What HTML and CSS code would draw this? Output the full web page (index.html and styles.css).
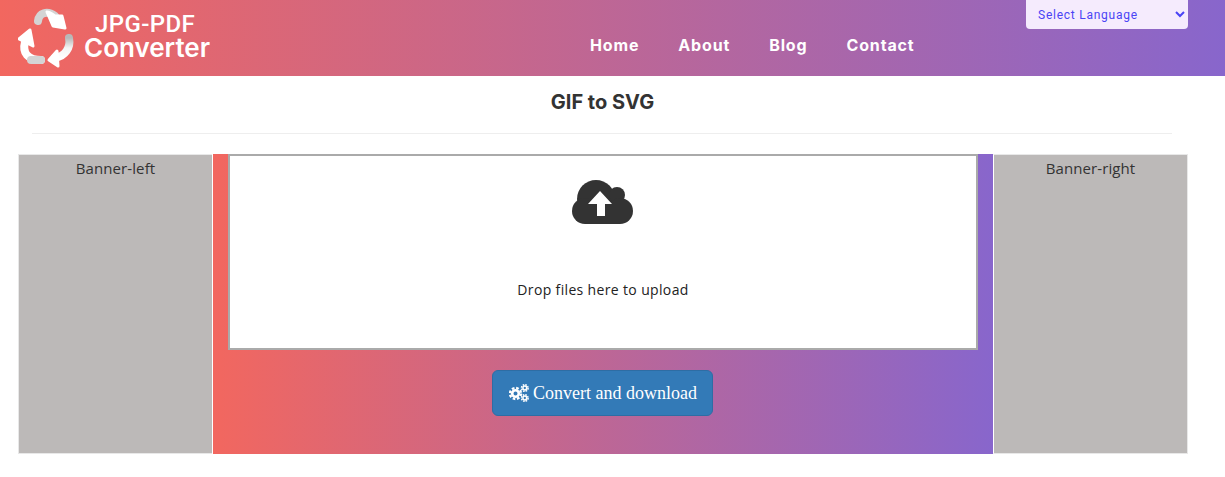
FILE: index.html
```html
<!DOCTYPE html>
<html>
  <head>
    <meta charset="UTF-8" />
    <title>GIF to SVG</title>
    <link rel="stylesheet" href="styles.css">
  </head>
  <body>
    <header class="topbar">
      <a class="logo" href="#">
        <svg class="logo-mark" width="58" height="60" viewBox="18 8 58 60">
          <defs>
            <linearGradient id="shade" x1="0" y1="0" x2="0" y2="1">
              <stop offset="0" stop-color="#b8b8b8" />
              <stop offset="0.5" stop-color="#f4f4f4" />
              <stop offset="1" stop-color="#ffffff" />
            </linearGradient>
          </defs>
          <!-- top arrow -->
          <path d="M38 21 C39 13 47 10 55 16" fill="none" stroke="#d4d4d4" stroke-width="8" stroke-linecap="round" />
          <path d="M47 12 C50 12 52 14 55 16 L62 16 L65 28 L53 26 Z" fill="#fff" stroke="#fff" stroke-width="3" stroke-linejoin="round" />
          <!-- left arrow -->
          <path d="M25 42 C22 53 28 60 41 60" fill="none" stroke="#fff" stroke-width="8" stroke-linecap="round" />
          <path d="M31 60 L41 60" stroke="#d4d4d4" stroke-width="8" stroke-linecap="round" />
          <path d="M30 30 L19 39 L33 46 Z" fill="#fff" stroke="#fff" stroke-width="3" stroke-linejoin="round" />
          <!-- right arrow -->
          <path d="M69 38 C71 48 65 56 55 58" fill="none" stroke="url(#shade)" stroke-width="8" stroke-linecap="round" />
          <path d="M49 60 L57 51 L58 66 Z" fill="#fff" stroke="#fff" stroke-width="3" stroke-linejoin="round" />
        </svg>
        <span class="logo-text">
          <span class="logo-top">JPG-PDF</span>
          <span class="logo-bottom">Converter</span>
        </span>
      </a>
      <nav class="nav">
        <a href="#">Home</a>
        <a href="#">About</a>
        <a href="#">Blog</a>
        <a href="#">Contact</a>
      </nav>
      <select class="lang">
        <option>Select Language</option>
      </select>
    </header>

    <h1 class="title">GIF to SVG</h1>
    <hr class="rule" />

    <main class="row">
      <aside class="banner">Banner-left</aside>
      <section class="tool">
        <div class="dropzone">
          <svg class="cloud" width="61" height="44" viewBox="0 0 61 44">
            <circle cx="24" cy="19" r="19" fill="#333" />
            <circle cx="45" cy="15" r="8" fill="#333" />
            <circle cx="13" cy="31" r="13" fill="#333" />
            <circle cx="48" cy="31" r="13" fill="#333" />
            <rect x="13" y="22" width="35" height="22" fill="#333" />
            <path d="M28 11 L40 24 L33 24 L33 36 L25 36 L25 24 L16 24 Z" fill="#fff" />
          </svg>
          <p class="drop-text">Drop files here to upload</p>
        </div>
        <button class="convert">
          <svg class="cogs" width="20" height="18" viewBox="0 0 20 18">
            <circle cx="6.5" cy="9.5" r="3.3" fill="none" stroke="#fff" stroke-width="2.6" />
            <circle cx="6.5" cy="9.5" r="5.5" fill="none" stroke="#fff" stroke-width="2.4" stroke-dasharray="2.6 1.72" />
            <circle cx="15.8" cy="4" r="1.9" fill="none" stroke="#fff" stroke-width="1.5" />
            <circle cx="15.8" cy="4" r="3.3" fill="none" stroke="#fff" stroke-width="1.5" stroke-dasharray="1.6 1" />
            <circle cx="15.8" cy="14" r="1.9" fill="none" stroke="#fff" stroke-width="1.5" />
            <circle cx="15.8" cy="14" r="3.3" fill="none" stroke="#fff" stroke-width="1.5" stroke-dasharray="1.6 1" />
          </svg>
          Convert and download
        </button>
      </section>
      <aside class="banner">Banner-right</aside>
    </main>
  </body>
</html>
```

FILE: styles.css
```css
:root {
  --grad-start: #f2675f;
  --grad-end: #8866cc;
  --text-color: #333333;
}

body {
  margin: 0;
  font-family: "Open Sans", "Liberation Sans", sans-serif;
  color: var(--text-color);
  background: #fff;
}

.topbar {
  display: flex;
  height: 76px;
  padding-right: 37px;
  box-sizing: border-box;
  background: linear-gradient(to right, var(--grad-start), var(--grad-end));
}

.logo {
  display: flex;
  align-items: center;
  width: 590px;
  padding-left: 18px;
  box-sizing: border-box;
  color: #fff;
  text-decoration: none;
}

.logo-mark {
  flex: none;
}

.logo-text {
  display: flex;
  flex-direction: column;
  margin-left: 8px;
  padding-bottom: 5px;
}

.logo-top {
  margin-left: 11px;
  font-family: "Roboto", sans-serif;
  font-size: 24px;
  font-weight: 500;
  line-height: 24px;
  letter-spacing: 0.4px;
}

.logo-bottom {
  font-family: "Inter", sans-serif;
  font-size: 26px;
  font-weight: 600;
  line-height: 24px;
}

.nav {
  display: flex;
  gap: 39px;
  padding-top: 35px;
}

.nav a {
  font-family: "Inter", sans-serif;
  font-size: 16px;
  font-weight: 700;
  line-height: 20px;
  letter-spacing: 0.85px;
  color: #fff;
  text-decoration: none;
}

.lang {
  align-self: flex-start;
  width: 162px;
  height: 29px;
  margin-left: auto;
  padding: 0 0 0 8px;
  border: none;
  border-radius: 0 0 4px 4px;
  background: #f5ebfd;
  color: #4a44f5;
  font-family: "Roboto", sans-serif;
  font-size: 12px;
  letter-spacing: 0.75px;
}

.title {
  margin: 0;
  padding: 15px 0 0 0;
  width: 1205px;
  text-align: center;
  font-family: "Inter", sans-serif;
  font-size: 20px;
  font-weight: 700;
  line-height: 23px;
}

.rule {
  width: 1140px;
  margin: 19px 0 20px 32px;
  border: none;
  border-top: 1px solid #eee;
}

.row {
  display: flex;
  width: 1170px;
  height: 300px;
  margin-left: 18px;
}

.banner {
  width: 194px;
  flex: none;
  box-sizing: border-box;
  padding-top: 4px;
  background: #bcb9b8;
  border: 1px solid #e8e8e8;
  border-right: none;
  text-align: center;
  font-size: 15px;
  line-height: 18px;
  letter-spacing: 0.1px;
}

.banner:last-child {
  width: 195px;
  border-right: 1px solid #e8e8e8;
  border-left: 1px solid #fff;
}

.tool {
  flex: 1;
  display: flex;
  flex-direction: column;
  align-items: center;
  border-left: 1px solid #fff;
  background: linear-gradient(to right, var(--grad-start), var(--grad-end));
}

.dropzone {
  width: 750px;
  height: 196px;
  box-sizing: border-box;
  display: flex;
  flex-direction: column;
  align-items: center;
  padding-top: 24px;
  border: 2px solid #aaa;
  background: #fff;
}

.cloud {
  margin-left: -1px;
}

.drop-text {
  margin: 56px 0 0 0;
  font-size: 14px;
  line-height: 20px;
  letter-spacing: 0.35px;
  color: #222;
}

.convert {
  display: flex;
  align-items: center;
  gap: 4px;
  width: 221px;
  height: 46px;
  margin: 20px 1px 0 0;
  padding: 0 0 0 16px;
  border: 1px solid #2e6da4;
  border-radius: 6px;
  background: #337ab7;
  color: #fff;
  font-family: "Liberation Serif", serif;
  font-size: 18px;
}
```
